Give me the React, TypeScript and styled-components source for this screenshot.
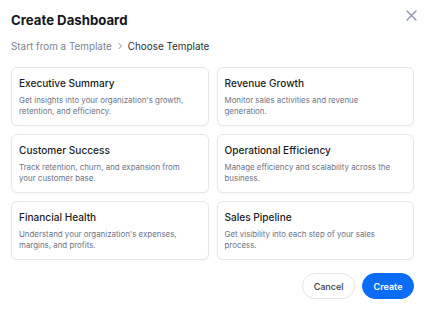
import React from "react";
import styled, { createGlobalStyle } from "styled-components";

const Global = createGlobalStyle`
  html, body { margin: 0; padding: 0; background: #ffffff; }
  body { font-family: Inter, "Noto Sans", "Liberation Sans", sans-serif; -webkit-font-smoothing: antialiased; }
  * { box-sizing: border-box; }
`;

const Dialog = styled.div`
  width: 427px;
  height: 309px;
  padding: 10px 13px 0 11px;
  display: flex;
  flex-direction: column;
  background: #fff;
`;

const Header = styled.div`
  display: flex;
  justify-content: space-between;
  align-items: flex-start;
`;

const Title = styled.h1`
  margin: 0;
  font-size: 13.2px;
  line-height: 20px;
  font-weight: 700;
  color: #16181d;
`;

const CloseButton = styled.button`
  border: none;
  background: none;
  padding: 0;
  margin: -1px -3px 0 0;
  width: 12px;
  height: 12px;
  display: flex;
  align-items: center;
  justify-content: center;
  cursor: pointer;
`;

const Breadcrumb = styled.div`
  margin-top: 8px;
  display: flex;
  align-items: center;
  gap: 5px;
  font-size: 9.9px;
  line-height: 16px;
`;

const Crumb = styled.span<{ $current?: boolean }>`
  color: ${(p) => (p.$current ? "#2a2e36" : "#7b8291")};
`;

const Grid = styled.div`
  margin-top: 13px;
  display: grid;
  grid-template-columns: 1fr 1fr;
  grid-auto-rows: 59px;
  column-gap: 8px;
  row-gap: 8px;
`;

const Card = styled.div`
  border: 1px solid #e3e6eb;
  border-radius: 6px;
  padding: 8px 8px 0 7px;
  box-shadow: 0 1px 2px rgba(20, 30, 50, 0.04);
  background: #fff;
`;

const CardTitle = styled.div`
  font-size: 10.1px;
  line-height: 14px;
  font-weight: 500;
  color: #1b1e24;
`;

const CardDesc = styled.div`
  margin-top: 5px;
  max-width: 170px;
  font-size: 7.9px;
  line-height: 10.5px;
  color: #6c7486;
`;

const Footer = styled.div`
  margin-top: 13px;
  display: flex;
  justify-content: flex-end;
  gap: 7px;
`;

const Button = styled.button<{ $primary?: boolean }>`
  height: 26px;
  padding: 0 10.5px;
  border-radius: 13px;
  font-family: inherit;
  font-size: 9px;
  font-weight: ${(p) => (p.$primary ? 600 : 500)};
  border: 1px solid ${(p) => (p.$primary ? "#0b6cf6" : "#e2e5ea")};
  background: ${(p) => (p.$primary ? "#0b6cf6" : "#fff")};
  color: ${(p) => (p.$primary ? "#fff" : "#353a45")};
  cursor: pointer;
`;

const templates = [
  { title: "Executive Summary", desc: "Get insights into your organization's growth, retention, and efficiency." },
  { title: "Revenue Growth", desc: "Monitor sales activities and revenue generation." },
  { title: "Customer Success", desc: "Track retention, churn, and expansion from your customer base." },
  { title: "Operational Efficiency", desc: "Manage efficiency and scalability across the business." },
  { title: "Financial Health", desc: "Understand your organization's expenses, margins, and profits." },
  { title: "Sales Pipeline", desc: "Get visibility into each step of your sales process." },
];

export default function App() {
  return (
    <>
      <Global />
      <Dialog>
        <Header>
          <Title>Create Dashboard</Title>
          <CloseButton aria-label="Close">
            <svg width="11" height="11" viewBox="0 0 11 11">
              <path d="M1 1L10 10M10 1L1 10" stroke="#8a94a7" strokeWidth="1.3" strokeLinecap="round" />
            </svg>
          </CloseButton>
        </Header>
        <Breadcrumb>
          <Crumb>Start from a Template</Crumb>
          <svg width="6" height="8" viewBox="0 0 6 8">
            <path d="M1.5 1L4.5 4L1.5 7" stroke="#8a91a0" strokeWidth="1" fill="none" />
          </svg>
          <Crumb $current>Choose Template</Crumb>
        </Breadcrumb>
        <Grid>
          {templates.map((t) => (
            <Card key={t.title}>
              <CardTitle>{t.title}</CardTitle>
              <CardDesc>{t.desc}</CardDesc>
            </Card>
          ))}
        </Grid>
        <Footer>
          <Button>Cancel</Button>
          <Button $primary>Create</Button>
        </Footer>
      </Dialog>
    </>
  );
}
